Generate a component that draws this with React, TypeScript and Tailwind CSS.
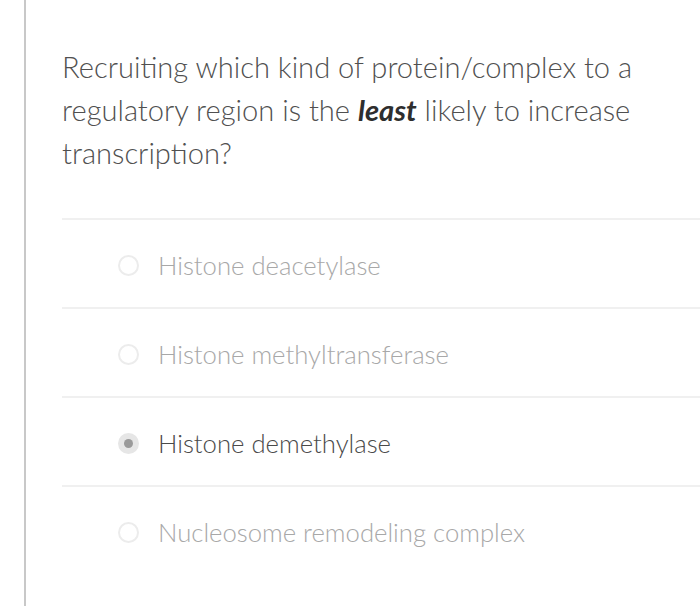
import React from "react";

const options = [
  { label: "Histone deacetylase", selected: false },
  { label: "Histone methyltransferase", selected: false },
  { label: "Histone demethylase", selected: true },
  { label: "Nucleosome remodeling complex", selected: false },
];

export default function App() {
  return (
    <div
      className="w-[700px] h-[606px] bg-white overflow-hidden flex"
      style={{ fontFamily: "Lato, 'Noto Sans', sans-serif" }}
    >
      <div className="ml-[24px] w-[2px] h-full bg-[#c8c8c8]" />
      <div className="flex-1 pl-[36px] pt-[45px]">
        <p className="text-[29.1px] leading-[43px] font-light text-[#505050] pr-[20px] pb-[44px]">
          Recruiting which kind of protein/complex to a regulatory region is the{" "}
          <b className="italic font-bold text-[#2e2e2e]">least</b> likely to increase transcription?
        </p>
        <div>
          {options.map((o) => (
            <div key={o.label} className="border-t-2 border-[#f0f0f0] h-[89px] flex items-center pl-[56px] pt-[3px]">
              {o.selected ? (
                <div className="w-[21px] h-[21px] rounded-full bg-[#e6e6e6] flex items-center justify-center">
                  <div className="w-[9px] h-[9px] rounded-full bg-[#9a9a9a]" />
                </div>
              ) : (
                <div className="w-[21px] h-[21px] rounded-full border-2 border-[#ececec]" />
              )}
              <span
                className={
                  "ml-[19px] text-[25.7px] font-light " + (o.selected ? "text-[#4a4a4a]" : "text-[#a8a8a8]")
                }
              >
                {o.label}
              </span>
            </div>
          ))}
        </div>
      </div>
    </div>
  );
}
